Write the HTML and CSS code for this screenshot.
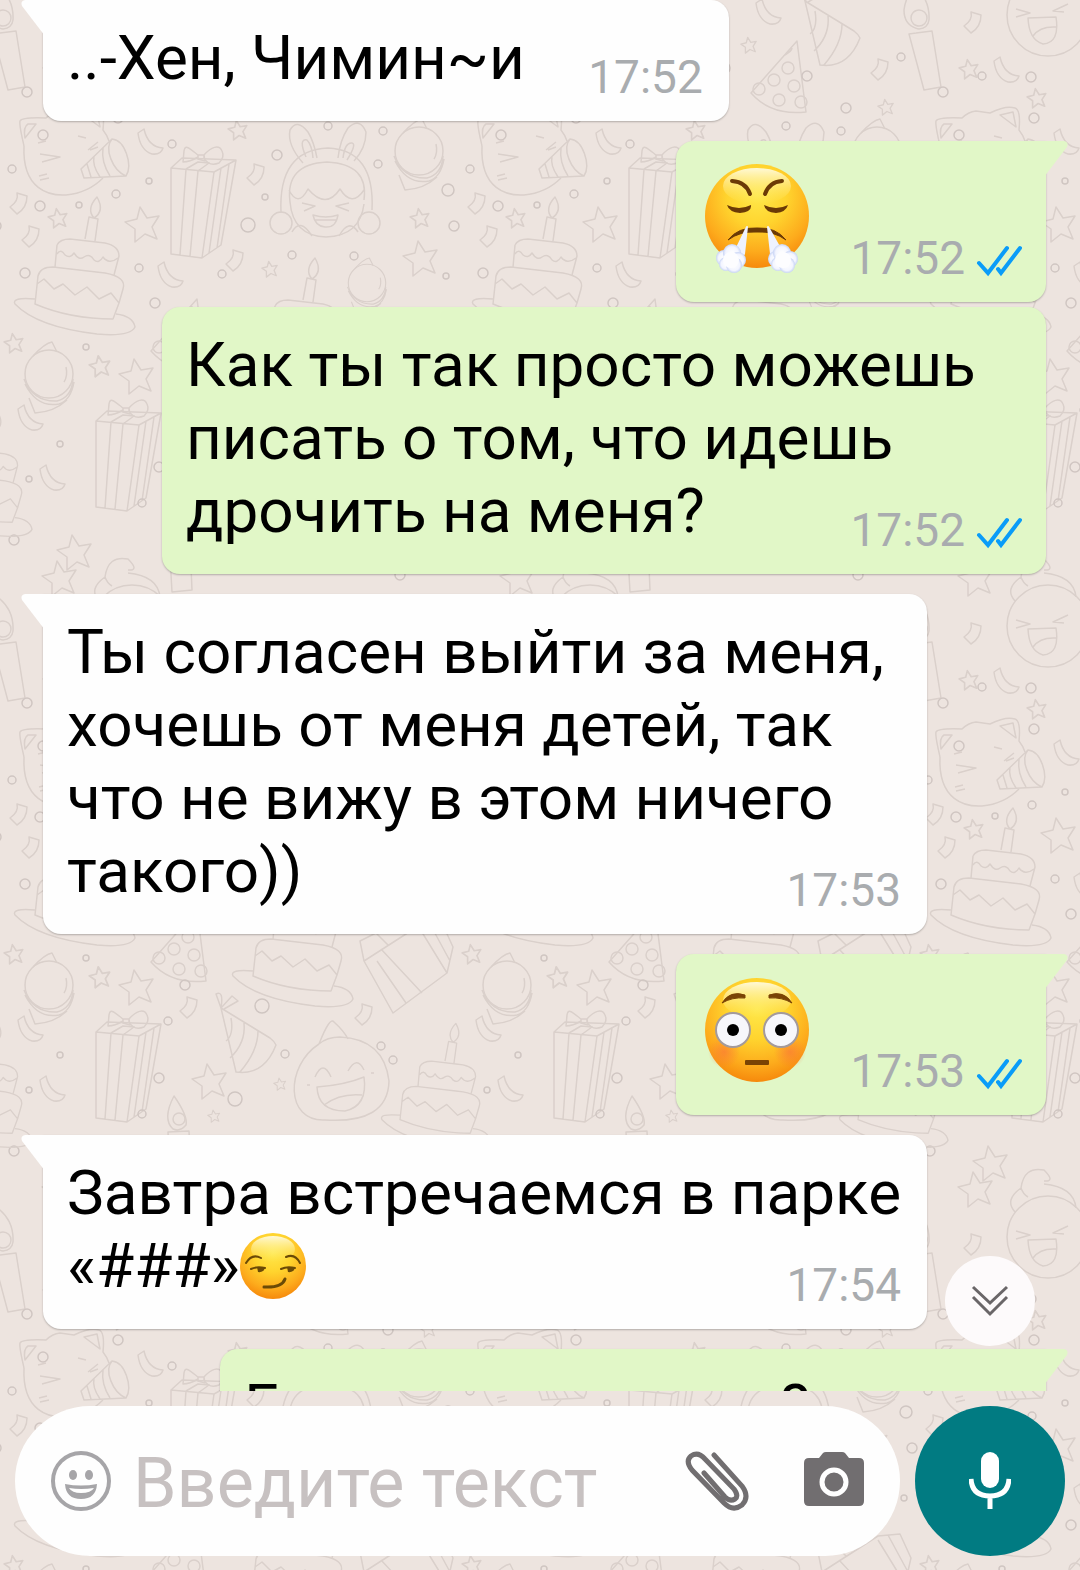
FILE: index.html
```html
<!DOCTYPE html>
<html lang="ru">
<head>
    <meta charset="UTF-8">
    <meta name="viewport" content="width=device-width, initial-scale=1.0">
    <title>Чат</title>
    <link rel="stylesheet" href="styles.css">
</head>
<body>
    <!-- Wallpaper -->
    <svg class="wallpaper" aria-hidden="true">
        <defs>
            <path id="star" d="M-3 -17 L4 -6 16 -8 9 3 14 15 2 10 -8 18 -8 5 -18 -2 -6 -5Z"/>
            <path id="confetti" d="M-2 -10 L8 -7 Q8 5 -2 11 L-9 4 Q0 -2 -2 -10Z"/>
            <path id="ribbon" d="M-12 -11 L-6 -15 Q-2 3 13 4 Q11 11 2 10 Q-10 6 -12 -11Z"/>
            <g id="gift">
                <path d="M0 21 L43 25 65 13 50 98 31 111 0 107Z M0 21 L11 11 65 13 M43 25 L31 111 M15 22 L9 108 M27 24 L19 109 M50 21 L38 106 M58 17 L46 101 M15 22 L27 15 38 16 27 24"/>
                <path d="M27 8 C18 1 14 -3 13 4 L12 15 Q19 15 27 10 M33 8 C40 0 48 -3 51 4 Q54 10 48 16 Q38 20 33 11Z M27 8 L33 8 34 14 27 12Z"/>
            </g>
            <g id="cake">
                <path d="M42 54 Q45 48 55 48 L90 52 Q104 55 104 65 L99 84 M42 54 L40 76 M42 63 q4 -6 8 1 q5 4 9 -2 q5 8 10 4 q6 -4 10 3 q5 4 9 -3 q6 8 15 1"/>
                <path d="M23 85 Q25 76 38 76 L90 82 Q112 86 108 98 L104 112 98 128 Q55 128 20 113Z M22 93 L29 88 39 98 48 93 60 104 72 96 84 108 96 102 104 112"/>
                <path d="M20 108 Q-4 106 0 113 Q22 136 82 143 Q115 146 120 136 Q118 125 101 123 M70 48 L74 26 83 28 80 50 M79 27 Q71 18 82 6 Q90 20 79 27Z"/>
            </g>
            <g id="ball">
                <circle r="24"/>
                <path d="M-16 -18 Q-4 -31 3 -32 L8 -22 M-25 5 Q-16 28 8 27 Q23 23 24 5 M-24 10 Q-12 34 10 30 Q22 26 25 8 M-20 24 L-14 39 Q5 38 18 26 M17 -7 Q19 2 15 8"/>
            </g>
            <g id="pizza">
                <path d="M46 0 L0 52 Q20 75 55 71 L46 0Z M34 14 Q41 10 41 7"/>
                <circle cx="37" cy="27" r="6"/><circle cx="23" cy="39" r="6"/><circle cx="8" cy="48" r="6"/>
                <circle cx="43" cy="45" r="6"/><circle cx="28" cy="59" r="6"/><circle cx="50" cy="61" r="6"/>
            </g>
            <g id="hat">
                <path d="M5 15 L20 79 Q48 83 60 52 Q58 48 54 45Z M15 25 Q18 42 10 48 M28 30 Q30 50 14 65 M42 38 Q42 58 24 79 M5 15 L0 1 Q8 -3 5 15 L16 3 22 8 8 16"/>
            </g>
            <g id="tile">
                <!-- cat with a party horn -->
                <path d="M24 146 C22 137 19 125 20 121 Q22 117 46 118 Q52 112 60 111 L74 113 Q90 105 99 108 Q105 110 103 130 Q107 135 109 141 M24 146 C22 190 50 196 66 195 Q88 193 103 178"/>
                <path d="M25 138 Q23 127 28 124 L36 124 Z M84 115 L97 112 100 127Z M40 154 L60 157 42 162 M88 150 L98 142 M90 150 L98 147 M78 136 L86 138 M39 176 L47 174 M40 180 L49 178 M38 143 L46 141"/>
                <path d="M81 169 L112 139 C125 140 133 165 126 176 L84 178Z M112 139 C104 148 112 170 126 176 M103 148 Q101 162 110 176 M94 157 Q92 165 100 177 M87 164 L91 177"/>
                <use href="#gift" x="171" y="147"/>
                <!-- girl with bunny ears -->
                <path d="M303 163 Q287 145 290 130 Q297 118 308 132 Q314 142 317 158 M338 158 Q340 140 348 128 Q360 117 366 132 Q366 148 354 161 M306 157 Q298 138 307 140 Q312 145 313 158 M343 158 Q345 142 352 143 Q357 144 347 160"/>
                <path d="M281 213 Q278 150 328 148 Q375 150 372 210 M290 202 Q285 164 327 162 Q369 164 364 200 M289 190 Q298 208 308 189 Q326 210 340 189 Q352 208 364 190 M290 202 Q293 236 326 237 Q360 236 364 204"/>
                <path d="M302 203 L315 206 304 211 M349 203 L336 206 349 211 M313 215 Q326 219 338 215 Q336 228 325 227 Q315 226 313 215Z M315 220 H337"/>
                <circle cx="281" cy="223" r="11"/><circle cx="369" cy="223" r="11"/>
                <path d="M292 232 Q300 217 312 236 M358 232 Q349 218 339 236"/>
                <use href="#ball" x="419" y="151"/>
                <use href="#cake" x="15" y="191"/>
                <use href="#cake" x="233" y="252"/>
                <g transform="translate(367 283) scale(.78)"><use href="#ball"/></g>
                <use href="#ball" x="49" y="374"/>
                <use href="#pizza" x="293" y="41"/>
                <use href="#pizza" x="151" y="299"/>
                <use href="#hat" x="342" y="-14"/>
                <use href="#hat" x="216" y="382"/>
                <use href="#gift" x="96" y="400"/>
                <!-- tilted box -->
                <path d="M364 350 L420 314 442 312 453 336 447 362 393 402Z M364 350 L360 330 376 322 388 334 M381 338 L422 382 M377 350 L406 392 M420 318 L447 362 M430 313 L450 350"/>
                <!-- laughing drop -->
                <path d="M319 433 Q330 405 334 411 Q344 420 348 428 M319 433 C285 455 285 511 325 509 Q388 513 389 470 Q384 428 340 426 Q327 426 319 433 M315 466 Q323 448 331 466 M348 460 Q357 444 364 459 M317 476 Q345 474 364 466 Q368 495 345 500 Q318 500 317 476Z M324 494 Q340 482 362 484 M307 474 h3 M371 462 h3"/>
                <g transform="translate(382 407) scale(.9)"><use href="#cake"/></g>
                <!-- candles -->
                <path d="M-7 34 L16 31 25 87 8 90Z M3 29 Q-12 26 -12 10 Q-10 -6 0 -12 Q14 0 13 20 Q12 28 3 29Z"/>
                <circle cx="3" cy="18" r="8"/>
                <path d="M173 518 Q162 508 174 485 Q188 505 186 514 Q180 521 173 518Z M168 521 L189 520 192 590 172 592Z"/>
                <circle cx="179" cy="508" r="6"/>
                <!-- face in a turban -->
                <circle cx="132" cy="15" r="41"/>
                <path d="M99 -10 Q88 -22 105 -34 Q108 -56 128 -52 Q140 -40 128 -41 M105 -34 Q107 -28 112 -25 M128 -38 Q158 -35 160 -14 M100 9 L114 13 100 17 M152 4 L137 11 148 12 M112 18 L140 17 Q144 43 127 44 Q113 40 112 18Z M117 36 Q124 26 140 27"/>
                <use href="#star" x="143" y="224"/>
                <use href="#star" x="421" y="258"/>
                <use href="#star" x="137" y="376"/>
                <use href="#star" x="210" y="470"/>
                <use href="#star" x="75" y="552"/>
                <use href="#star" x="60" y="-33"/>
                <g class="small-star">
                    <use href="#star" transform="translate(58 218) scale(.55)"/>
                    <use href="#star" transform="translate(420 218) scale(.55)"/>
                    <use href="#star" transform="translate(238 130) scale(.55)"/>
                    <use href="#star" transform="translate(270 269) scale(.45)"/>
                    <use href="#star" transform="translate(14 343) scale(.55)"/>
                    <use href="#star" transform="translate(100 366) scale(.6)"/>
                    <use href="#star" transform="translate(280 473) scale(.35)"/>
                    <use href="#star" transform="translate(214 505) scale(.35)"/>
                    <use href="#star" transform="translate(53 69) scale(.55)"/>
                    <use href="#star" transform="translate(121 98) scale(.55)"/>
                    <use href="#star" transform="translate(291 45) scale(.45)"/>
                    <use href="#star" transform="translate(428 107) scale(.45)"/>
                </g>
                <use href="#confetti" x="19" y="203"/>
                <use href="#confetti" x="256" y="174"/>
                <use href="#confetti" x="235" y="260"/>
                <use href="#confetti" x="31" y="236"/>
                <use href="#confetti" x="189" y="396"/>
                <use href="#confetti" x="364" y="403"/>
                <use href="#confetti" x="57" y="22"/>
                <use href="#confetti" x="422" y="69"/>
                <use href="#confetti" x="200" y="70"/>
                <use href="#ribbon" x="150" y="144"/>
                <use href="#ribbon" x="170" y="277"/>
                <use href="#ribbon" x="52" y="480"/>
                <use href="#ribbon" x="90" y="72"/>
                <use href="#ribbon" x="310" y="14"/>
                <use href="#ribbon" x="30" y="420"/>
                <g class="dots">
                    <circle cx="12" cy="169" r="4"/><circle cx="40" cy="206" r="5"/><circle cx="79" cy="205" r="3"/>
                    <circle cx="116" cy="194" r="4"/><circle cx="149" cy="181" r="3"/><circle cx="172" cy="144" r="4"/>
                    <circle cx="277" cy="155" r="5"/><circle cx="248" cy="225" r="7"/><circle cx="265" cy="197" r="3"/>
                    <circle cx="378" cy="164" r="4"/><circle cx="383" cy="131" r="4"/><circle cx="448" cy="190" r="6"/>
                    <circle cx="454" cy="226" r="5"/><circle cx="139" cy="268" r="4"/><circle cx="155" cy="303" r="5"/>
                    <circle cx="25" cy="273" r="5"/><circle cx="292" cy="255" r="4"/><circle cx="354" cy="256" r="4"/>
                    <circle cx="222" cy="274" r="4"/><circle cx="86" cy="347" r="3"/><circle cx="446" cy="276" r="3"/>
                    <circle cx="185" cy="374" r="5"/><circle cx="262" cy="395" r="7"/>
                    <circle cx="168" cy="410" r="4"/><circle cx="159" cy="467" r="5"/><circle cx="235" cy="488" r="7"/>
                    <circle cx="285" cy="443" r="4"/><circle cx="381" cy="435" r="4"/><circle cx="393" cy="449" r="4"/>
                    <circle cx="60" cy="444" r="3"/><circle cx="29" cy="479" r="3"/><circle cx="142" cy="503" r="4"/>
                    <circle cx="27" cy="92" r="5"/><circle cx="66" cy="76" r="4"/><circle cx="115" cy="77" r="5"/>
                    <circle cx="262" cy="24" r="5"/><circle cx="266" cy="68" r="6"/><circle cx="349" cy="76" r="5"/>
                    <circle cx="443" cy="57" r="4"/><circle cx="388" cy="108" r="5"/><circle cx="328" cy="126" r="4"/>
                    <circle cx="118" cy="118" r="5"/><circle cx="43" cy="135" r="5"/><circle cx="14" cy="540" r="5"/>
                    <circle cx="230" cy="560" r="5"/><circle cx="330" cy="550" r="4"/><circle cx="400" cy="575" r="5"/>
                </g>
            </g>
            <pattern id="party" width="458" height="611" patternUnits="userSpaceOnUse">
                <use href="#tile"/>
                <use href="#tile" x="458"/>
                <use href="#tile" x="-458"/>
                <use href="#tile" y="611"/>
            </pattern>
        </defs>
        <rect width="100%" height="100%" fill="url(#party)"/>
    </svg>

    <!-- Shared icons -->
    <svg class="sprite" aria-hidden="true">
        <defs>
            <radialGradient id="face" cx=".5" cy=".3" r=".72">
                <stop offset="0" stop-color="#ffe84a"/>
                <stop offset=".4" stop-color="#ffd42e"/>
                <stop offset=".75" stop-color="#fdab1c"/>
                <stop offset="1" stop-color="#f5850a"/>
            </radialGradient>
            <linearGradient id="shine" x1="0" y1="0" x2="0" y2="1">
                <stop offset="0" stop-color="#fffbe0" stop-opacity=".95"/>
                <stop offset="1" stop-color="#ffee70" stop-opacity="0"/>
            </linearGradient>
            <radialGradient id="blush">
                <stop offset="0" stop-color="#f9703a" stop-opacity=".6"/>
                <stop offset="1" stop-color="#f9703a" stop-opacity="0"/>
            </radialGradient>
            <radialGradient id="puff">
                <stop offset="0" stop-color="#ffffff"/>
                <stop offset=".7" stop-color="#f3f5ff"/>
                <stop offset="1" stop-color="#c8d4f5"/>
            </radialGradient>
        </defs>
        <symbol id="ticks" viewBox="0 0 46 32">
            <path d="M3 18 L12 28 L31 3 M22 24 L25 28 L44 3" fill="none" stroke="#0a9cf8" stroke-width="4" stroke-linecap="round" stroke-linejoin="miter"/>
        </symbol>
    </svg>

    <main class="chat">
        <div class="message incoming tail">
            <p class="text">..-Хен, Чимин~и</p>
            <div class="meta"><time>17:52</time></div>
        </div>

        <div class="message outgoing tail">
            <div class="text big">
                <svg class="emoji-big" viewBox="-2 0 110 113" role="img" aria-label="Лицо с паром из носа">
                    <circle cx="55" cy="54" r="52" fill="url(#face)"/>
                    <ellipse cx="55" cy="24" rx="34" ry="18" fill="url(#shine)"/>
                    <g fill="none" stroke="#6b3a06" stroke-width="4" stroke-linecap="round">
                        <path d="M30 19 Q44 20 48 32"/>
                        <path d="M80 19 Q67 20 63 32"/>
                    </g>
                    <path d="M25 43 Q37 49 49 43 Q50 50 38 51 Q27 50 25 43Z M62 43 Q74 49 86 43 Q84 50 74 51 Q63 50 62 43Z" fill="#6b3a06"/>
                    <path d="M26 78 Q36 65 55 66 Q74 65 84 78 Q72 69 55 70 Q38 69 26 78Z" fill="#6b3a06" stroke="#6b3a06"/>
                    <path d="M45 65 L32 92 L42 92Z M66 65 L69 92 L80 90Z" fill="#eef2ff" stroke="#eef2ff" stroke-width="2" stroke-linejoin="round"/>
                    <g fill="url(#puff)">
                        <circle cx="22" cy="96" r="8"/><circle cx="30" cy="91" r="9"/><circle cx="36" cy="98" r="8"/><circle cx="24" cy="102" r="7"/><circle cx="32" cy="103" r="8"/>
                        <circle cx="74" cy="97" r="8"/><circle cx="80" cy="91" r="9"/><circle cx="88" cy="97" r="8"/><circle cx="76" cy="102" r="7"/><circle cx="85" cy="103" r="8"/>
                    </g>
                    <circle cx="29" cy="98" r="8" fill="#fdfdff"/>
                    <circle cx="81" cy="98" r="8" fill="#fdfdff"/>
                </svg>
            </div>
            <div class="meta"><time>17:52</time><svg class="ticks" role="img" aria-label="Прочитано"><use href="#ticks"/></svg></div>
        </div>

        <div class="message outgoing follow">
            <p class="text">Как ты так просто можешь писать о том, что идешь дрочить на меня?</p>
            <div class="meta"><time>17:52</time><svg class="ticks" role="img" aria-label="Прочитано"><use href="#ticks"/></svg></div>
        </div>

        <div class="message incoming tail">
            <p class="text">Ты согласен выйти за меня, хочешь от меня детей, так что не вижу в этом ничего такого))</p>
            <div class="meta"><time>17:53</time></div>
        </div>

        <div class="message outgoing tail">
            <div class="text big">
                <svg class="emoji-big" viewBox="-2 0 110 113" role="img" aria-label="Смущённое лицо">
                    <circle cx="55" cy="55" r="52" fill="url(#face)"/>
                    <ellipse cx="55" cy="25" rx="34" ry="18" fill="url(#shine)"/>
                    <circle cx="22" cy="77" r="16" fill="url(#blush)"/>
                    <circle cx="88" cy="77" r="16" fill="url(#blush)"/>
                    <path d="M20 28 Q28 15 43 20 L43 23 Q30 22 20 28Z M90 28 Q82 15 67 20 L67 23 Q80 22 90 28Z" fill="#7a4304" stroke="#7a4304" stroke-linejoin="round"/>
                    <g fill="#f7f7fb" stroke="#a39a9c" stroke-width="2">
                        <circle cx="31" cy="55" r="17"/>
                        <circle cx="79" cy="55" r="17"/>
                    </g>
                    <circle cx="31" cy="55" r="6" fill="#000"/>
                    <circle cx="79" cy="55" r="6" fill="#000"/>
                    <rect x="43" y="85" width="24" height="5" rx="1" fill="#7a4304"/>
                </svg>
            </div>
            <div class="meta"><time>17:53</time><svg class="ticks" role="img" aria-label="Прочитано"><use href="#ticks"/></svg></div>
        </div>

        <div class="message incoming tail">
            <p class="text">Завтра встречаемся в парке «###»<svg class="emoji" viewBox="0 0 66 66" role="img" aria-label="Ухмылка">
                    <circle cx="33" cy="33" r="33" fill="url(#face)"/>
                    <ellipse cx="33" cy="16" rx="22" ry="13" fill="url(#shine)"/>
                    <g fill="none" stroke="#6b4a06" stroke-width="2" stroke-linecap="round">
                        <path d="M6 30 Q12 20 21 25"/>
                        <path d="M46 24 Q55 20 60 30"/>
                        <path d="M11 36 Q17 33 25 35"/>
                        <path d="M41 36 Q47 33 55 35"/>
                    </g>
                    <path d="M17 34 H25 Q24 40 18 39Z M47 34 H55 Q54 40 48 39Z" fill="#6b4a06"/>
                    <path d="M24 54 Q42 55 45 46" fill="none" stroke="#6b4a06" stroke-width="3" stroke-linecap="round"/>
                </svg></p>
            <div class="meta"><time>17:54</time></div>
        </div>

        <div class="message outgoing tail">
            <p class="text">Где и во сколько...?</p>
            <div class="meta"><time>17:54</time><svg class="ticks" role="img" aria-label="Прочитано"><use href="#ticks"/></svg></div>
        </div>

        <button class="scroll-down" type="button" aria-label="Вниз">
            <svg viewBox="0 0 38 32"><path d="M2 2 L19 18 L36 2 M2 12 L19 29 L36 12"/></svg>
        </button>
    </main>

    <form class="composer">
        <div class="field">
            <button class="icon-button smile" type="button" aria-label="Эмодзи">
                <svg viewBox="0 0 60 60">
                    <circle cx="30" cy="30" r="28" fill="none" stroke="currentColor" stroke-width="4"/>
                    <ellipse cx="22" cy="24" rx="4" ry="5" fill="currentColor"/>
                    <ellipse cx="38" cy="24" rx="4" ry="5" fill="currentColor"/>
                    <path d="M14 33 Q30 36 46 33 Q45 48 30 48 Q15 48 14 33Z" fill="currentColor"/>
                    <path d="M18 37 Q30 39 43 37 Q40 42 30 42 Q21 42 18 37Z" fill="#fff"/>
                </svg>
            </button>
            <input type="text" placeholder="Введите текст" aria-label="Введите текст">
            <button class="icon-button" type="button" aria-label="Прикрепить">
                <svg viewBox="0 0 64 60">
                    <path d="M29 4 L57 35 Q65 46 57 54 Q48 61 39 52 L7 19 Q0 10 6 5 Q13 0 20 8 L49 38 Q54 45 50 48 Q45 51 40 46 L19 22" fill="none" stroke="currentColor" stroke-width="5" stroke-linecap="round"/>
                </svg>
            </button>
            <button class="icon-button camera" type="button" aria-label="Камера">
                <svg viewBox="0 0 60 60">
                    <path d="M5 7 H15 L19 2 Q20 1 22 1 H38 Q40 1 41 2 L45 7 H55 Q60 7 60 12 V50 Q60 55 55 55 H5 Q0 55 0 50 V12 Q0 7 5 7Z" fill="currentColor"/>
                    <circle cx="30" cy="31" r="12" fill="none" stroke="#fff" stroke-width="5"/>
                </svg>
            </button>
        </div>
        <button class="mic" type="button" aria-label="Голосовое сообщение">
            <svg viewBox="0 0 42 58">
                <rect x="12" y="0" width="18" height="36" rx="9" fill="#fff"/>
                <path d="M2 27 Q3 44 21 44 Q39 44 40 27 M21 44 V57" fill="none" stroke="#fff" stroke-width="5"/>
            </svg>
        </button>
    </form>
</body>
</html>
```
FILE: styles.css
```css
* {
    box-sizing: border-box;
}

body {
    margin: 0;
    height: 100vh;
    display: flex;
    flex-direction: column;
    position: relative;
    overflow: hidden;
    background: #ede4df;
    font-family: Roboto, "Liberation Sans", sans-serif;
    color: #000;
}

button {
    border: 0;
    padding: 0;
    cursor: pointer;
}

button svg {
    display: block;
}

.wallpaper {
    position: absolute;
    inset: 0;
    width: 100%;
    height: 100%;
    z-index: -1;
    fill: none;
    stroke: #dad0cb;
    stroke-width: 1.5;
    stroke-linejoin: round;
}

.wallpaper rect {
    stroke: none;
}

.small-star {
    stroke-width: 3;
}

.dots {
    stroke: #d0c6c2;
}

.sprite {
    position: absolute;
    width: 0;
    height: 0;
}

.chat {
    flex: 1;
    min-height: 0;
    position: relative;
    overflow: hidden;
    display: flex;
    flex-direction: column;
    gap: 20px;
    padding: 0 34px 0 43px;
}

.message {
    flex: none;
    position: relative;
    display: grid;
    max-width: calc(100% - 119px);
    padding: 21px 24px 17px;
    border-radius: 18px;
    box-shadow: 0 1px 2px rgba(0, 0, 0, 0.25);
}

.incoming {
    align-self: flex-start;
    padding-right: 22px;
    background: #fefefe;
}

.outgoing {
    align-self: flex-end;
    background: #e1f7c7;
}

.follow {
    margin-top: -15px;
}

.incoming.tail {
    border-top-left-radius: 0;
}

.outgoing.tail {
    border-top-right-radius: 0;
}

.tail::before {
    content: "";
    position: absolute;
    top: 0;
    width: 24px;
    height: 36px;
    background: inherit;
    clip-path: path("M4 0 H24 V36 L1 6 Q-1 1 4 0 Z");
}

.incoming.tail::before {
    left: -22px;
}

.outgoing.tail::before {
    right: -22px;
    transform: scaleX(-1);
}

.text,
.meta {
    grid-area: 1 / 1;
}

.text {
    margin: 0;
    padding-bottom: 10px;
    font-size: 62px;
    line-height: 73px;
}

/* keeps the last line clear of the time */
.text::after {
    content: "";
    display: inline-block;
    width: 182px;
}

.outgoing .text::after {
    width: 212px;
}

.text.big {
    display: flex;
}

.emoji-big {
    width: 110px;
    height: 113px;
}

.emoji {
    width: 66px;
    height: 66px;
    vertical-align: -12px;
}

.meta {
    align-self: end;
    justify-self: end;
    display: flex;
    align-items: center;
    gap: 11px;
    font-size: 46px;
    line-height: 54px;
    color: #a9acaf;
}

.incoming .meta {
    padding-right: 4px;
}

.ticks {
    width: 46px;
    height: 32px;
    margin-top: 6px;
}

.scroll-down {
    position: absolute;
    right: 45px;
    bottom: 45px;
    width: 90px;
    height: 90px;
    border-radius: 50%;
    background: #fdfafb;
    display: grid;
    place-items: center;
}

.scroll-down svg {
    width: 38px;
    height: 32px;
    fill: none;
    stroke: #6a6668;
    stroke-width: 3;
}

.composer {
    display: flex;
    gap: 15px;
    padding: 15px 15px 14px;
}

.field {
    flex: 1;
    min-width: 0;
    height: 150px;
    display: flex;
    align-items: center;
    padding: 0 36px;
    border-radius: 75px;
    background: #fefefe;
}

.field input {
    flex: 1;
    min-width: 0;
    margin: 0 20px 0 22px;
    padding: 4px 0 0;
    border: 0;
    outline: 0;
    background: none;
    font: inherit;
    font-size: 70px;
    line-height: 82px;
    color: #000;
}

.field input::placeholder {
    color: #c7c1c1;
    opacity: 1;
}

.icon-button {
    flex: none;
    background: none;
    color: #716e70;
}

.icon-button svg {
    width: 64px;
    height: 60px;
}

.smile {
    color: #a6a5a8;
}

.smile svg,
.camera svg {
    width: 60px;
}

.camera {
    margin-left: 55px;
}

.mic {
    flex: none;
    width: 150px;
    height: 150px;
    border-radius: 50%;
    background: #017b82;
    display: grid;
    place-items: center;
}

.mic svg {
    width: 42px;
    height: 58px;
}
```
